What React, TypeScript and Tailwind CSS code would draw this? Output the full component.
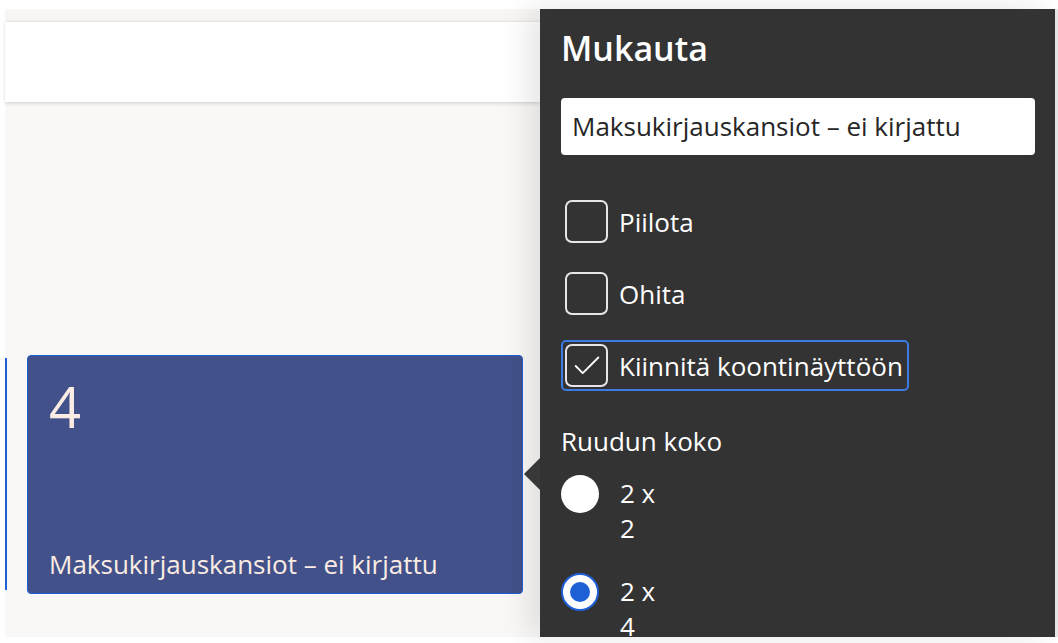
import { Check } from 'lucide-react';

const font = { fontFamily: '"Open Sans", "Noto Sans", Arial, sans-serif' };

function CheckRow({ label, checked, focused }: { label: string; checked?: boolean; focused?: boolean }) {
  return (
    <div
      className={`flex w-fit items-center gap-[11px] rounded-[5px] border-2 p-[2px] pr-[4px] ${
        focused ? 'border-[#3b7be6]' : 'border-transparent'
      }`}
    >
      <div className="flex size-[43px] items-center justify-center rounded-[7px] border-2 border-[#e6e6e6]">
        {checked && <Check className="size-[34px] text-white" strokeWidth={1.3} />}
      </div>
      <span className="text-[26px] font-medium leading-[34px] text-white">{label}</span>
    </div>
  );
}

function RadioRow({ label, selected }: { label: string[]; selected?: boolean }) {
  return (
    <div className="flex items-start gap-[21px]">
      <div
        className={`mt-[-1px] flex size-[38px] shrink-0 items-center justify-center rounded-full ${
          selected ? 'border-2 border-[#1f5fd6] bg-white' : 'bg-white'
        }`}
      >
        {selected && <div className="size-[20px] rounded-full bg-[#1f5fd6]" />}
      </div>
      <div className="text-[26px] leading-[35px] text-white">
        {label.map((l) => (
          <div key={l}>{l}</div>
        ))}
      </div>
    </div>
  );
}

export default function App() {
  return (
    <div className="flex h-[643px] w-[1058px] overflow-hidden bg-white pb-[6px] pl-[5px] pt-[9px]" style={font}>
      <div className="flex min-w-0 flex-1 flex-col bg-[#f9f8f7]">
        <div className="h-[13px] shrink-0 bg-[#f7f6f5]" />
        <div className="h-[80px] shrink-0 bg-white shadow-[0_2px_3px_rgba(0,0,0,0.12),0_-1px_2px_rgba(0,0,0,0.08)]" />
        <div className="flex flex-1 items-start gap-[20px] pt-[253px]">
          <div className="mt-[3px] h-[232px] w-[2px] bg-[#1f5fd6]" />
          <div className="flex h-[239px] w-[496px] flex-col justify-between rounded-[4px] border border-[#1f5fd6] bg-[#42518a] px-[21px] pb-[12px] pt-[20px] text-[#fbece3]">
            <div className="text-[56px] leading-[60px]">4</div>
            <div className="text-[26px] leading-[34px]">Maksukirjauskansiot – ei kirjattu</div>
          </div>
        </div>
      </div>

      <div className="relative w-[515px] shrink-0 bg-[#333333] pl-[21px] pr-[20px] pt-[16px] shadow-[-12px_0_28px_rgba(0,0,0,0.1)]">
        <div className="absolute left-[-16px] top-[449px] h-0 w-0 border-y-[16px] border-r-[16px] border-y-transparent border-r-[#383838]" />
        <div className="h-full overflow-hidden">
          <h1 className="text-[34px] font-semibold leading-[46px] text-white">Mukauta</h1>
          <div className="mt-[27px] flex h-[57px] items-center rounded-[4px] bg-white px-[11px] text-[26px] text-[#262626]">
            Maksukirjauskansiot – ei kirjattu
          </div>
          <div className="mt-[41px] flex flex-col gap-[21px]">
            <CheckRow label="Piilota" />
            <CheckRow label="Ohita" />
            <CheckRow label="Kiinnitä koontinäyttöön" checked focused />
          </div>
          <div className="mt-[33px] text-[26px] font-medium leading-[34px] text-white">Ruudun koko</div>
          <div className="mt-[18px] flex flex-col gap-[28px]">
            <RadioRow label={['2 x', '2']} />
            <RadioRow label={['2 x', '4']} selected />
          </div>
        </div>
      </div>
      <div className="w-[3px] shrink-0 bg-[#e8e8e8]" />
    </div>
  );
}
